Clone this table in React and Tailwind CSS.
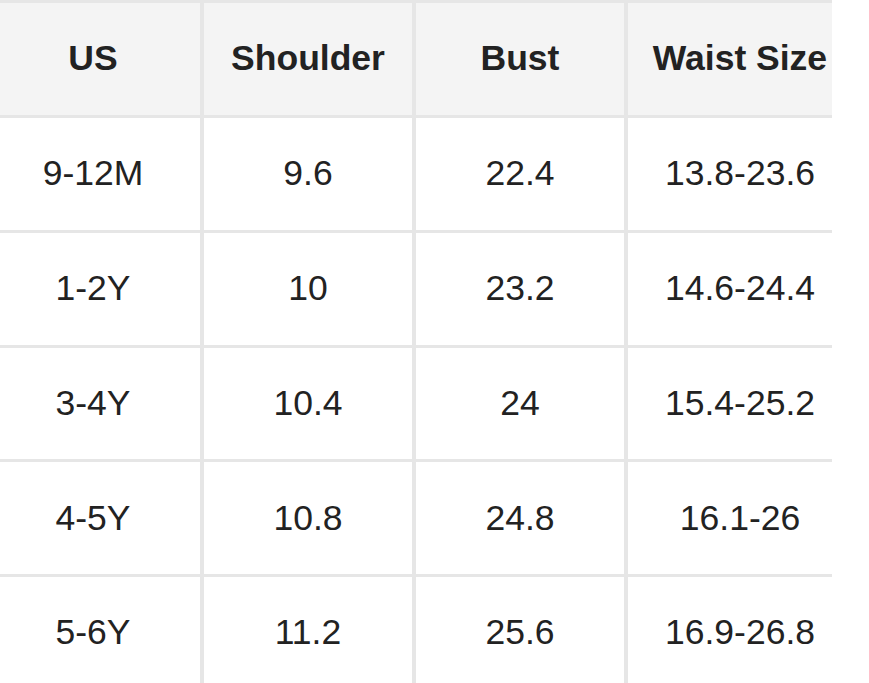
export default function App() {
  const header = ["US", "Shoulder", "Bust", "Waist Size"];
  const rows = [
    ["9-12M", "9.6", "22.4", "13.8-23.6"],
    ["1-2Y", "10", "23.2", "14.6-24.4"],
    ["3-4Y", "10.4", "24", "15.4-25.2"],
    ["4-5Y", "10.8", "24.8", "16.1-26"],
    ["5-6Y", "11.2", "25.6", "16.9-26.8"],
  ];
  return (
    <div className="h-[683px] w-[869px] overflow-hidden bg-white" style={{ fontFamily: '"Liberation Sans", Arial, sans-serif' }}>
      <div className="w-[832px] overflow-hidden">
        <div className="ml-[-14px] w-[866px] grid grid-cols-[214px_208px_208px_224px] gap-x-[4px] gap-y-[3px] pt-[3px] bg-[#e6e6e6] text-[35.5px] text-[#222]">
          {header.map((h) => (
            <div key={h} className="h-[112px] bg-[#f4f4f4] flex items-center justify-center font-bold">
              {h}
            </div>
          ))}
          {rows.map((r, i) =>
            r.map((c, j) => (
              <div key={i + "-" + j} className="h-[111.75px] bg-white flex items-center justify-center">
                {c}
              </div>
            ))
          )}
        </div>
      </div>
    </div>
  );
}
